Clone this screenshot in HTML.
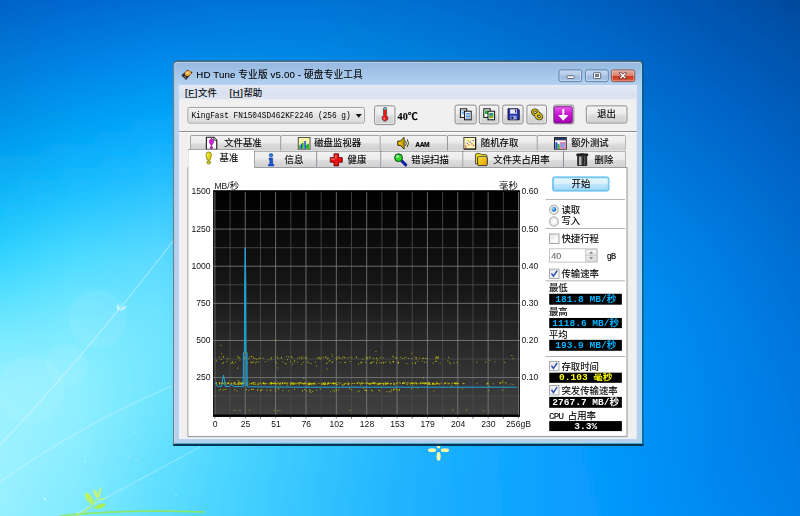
<!DOCTYPE html>
<html lang="zh-CN"><head><meta charset="utf-8"><title>HD Tune 专业版 v5.00 - 硬盘专业工具</title>
<style>
html,body{margin:0;padding:0}
body{width:800px;height:516px;overflow:hidden;position:relative;background:#0a8cee;font-family:"Liberation Sans","Noto Sans CJK SC",sans-serif}
#bg{position:absolute;left:0;top:0;width:800px;height:516px;overflow:hidden}
#sc{position:absolute;left:0;top:0;width:1024px;height:661px;transform:scale(.78125);transform-origin:0 0}
#sc *{box-sizing:border-box}
.abs{position:absolute}
.ui{font-family:"Liberation Sans","Noto Sans CJK SC",sans-serif;font-size:12px;color:#000;white-space:nowrap;line-height:14px;-webkit-text-stroke:.15px #000}
.mono{font-family:"Liberation Mono","Noto Sans CJK SC",monospace}
#win{position:absolute;border-style:solid;border-width:2px 2px 3px 2px;border-color:#575b62 #15506a #073556 #6e7e8e;border-radius:7px 7px 0 0;
 background:linear-gradient(#96b8df 0,#b2d1f1 29px,#b6d2f0 30px,#b3d0ee 100%);box-shadow:inset 1px 1px 0 #d8e7f8,inset -1px 0 0 #8fe2f8,inset 0 -1px 0 #22a0b0}
#client{position:absolute;background:#f0f0f0}
.cap{position:absolute;border:1px solid #4d6e9c;border-radius:3px;box-shadow:inset 0 0 0 1px rgba(255,255,255,.55);background:linear-gradient(#c3d7f0 0,#b4cbea 48%,#9dbbe2 52%,#a9c5e8 100%)}
.cap.close{border-color:#8a3a30;background:linear-gradient(#e9b0a4 0,#dc7f6f 48%,#c8391f 52%,#d9583a 100%)}
#menubar{position:absolute;background:linear-gradient(#e4eaf6,#d9e1ef 60%,#dde5f1)}
.btn{position:absolute;border:1px solid #707070;border-radius:3px;background:linear-gradient(#f2f2f2 0,#ebebeb 48%,#dddddd 52%,#cfcfcf 100%);box-shadow:inset 0 0 0 1px #fcfcfc}
.tab{position:absolute;border:1px solid #767a84;border-bottom:none;background:linear-gradient(#f2f2f2 0,#ebebeb 48%,#dddddd 52%,#cfcfcf 100%);border-radius:2px 2px 0 0}
.tab.sel{background:#fff}
.tab span{position:absolute}
#page{position:absolute;background:#fff;border:1px solid #80848d;box-shadow:1px 1px 0 #d4d6da}
.sep{position:absolute;height:1px;background:#a0a0a0}
.lcd{position:absolute;background:#000;font-family:"Liberation Mono","Noto Sans CJK SC",monospace;font-weight:bold;font-size:12.2px;line-height:14px;text-align:center;white-space:nowrap;overflow:hidden}
.chk{position:absolute;border:1px solid #8e8f8f;background:linear-gradient(135deg,#dcdcdc,#fff 70%);box-shadow:inset 0 0 0 1px #f4f4f4}
.rad{position:absolute;border:1px solid #8e8f8f;border-radius:50%;background:radial-gradient(#fff 20%,#d8d8d8)}
svg{position:absolute;overflow:visible}
svg text{font-family:"Liberation Sans","Noto Sans CJK SC",sans-serif}
</style></head><body>
<svg id="bg" width="800" height="516" viewBox="0 0 800 516"><defs>
<linearGradient id="r0" x1="0" x2="1" y1="0" y2="0"><stop offset="0.00" stop-color="#0057c0"/><stop offset="0.10" stop-color="#005cc7"/><stop offset="0.20" stop-color="#0062cc"/><stop offset="0.30" stop-color="#0067cf"/><stop offset="0.40" stop-color="#0068ce"/><stop offset="0.50" stop-color="#0065c9"/><stop offset="0.60" stop-color="#0061c3"/><stop offset="0.70" stop-color="#005bbb"/><stop offset="0.80" stop-color="#0054b1"/><stop offset="0.90" stop-color="#004ca4"/><stop offset="1.00" stop-color="#004496"/></linearGradient>
<linearGradient id="r1" x1="0" x2="1" y1="0" y2="0"><stop offset="0.00" stop-color="#005bc3"/><stop offset="0.10" stop-color="#0061cb"/><stop offset="0.20" stop-color="#0067d0"/><stop offset="0.30" stop-color="#006bd2"/><stop offset="0.40" stop-color="#006cd1"/><stop offset="0.50" stop-color="#0069cd"/><stop offset="0.60" stop-color="#0064c6"/><stop offset="0.70" stop-color="#005ebe"/><stop offset="0.80" stop-color="#0056b4"/><stop offset="0.90" stop-color="#004ea7"/><stop offset="1.00" stop-color="#004699"/></linearGradient>
<linearGradient id="r2" x1="0" x2="1" y1="0" y2="0"><stop offset="0.00" stop-color="#005fc6"/><stop offset="0.10" stop-color="#0066ce"/><stop offset="0.20" stop-color="#006cd4"/><stop offset="0.30" stop-color="#0070d6"/><stop offset="0.40" stop-color="#0070d4"/><stop offset="0.50" stop-color="#006dd0"/><stop offset="0.60" stop-color="#0067c9"/><stop offset="0.70" stop-color="#0061c1"/><stop offset="0.80" stop-color="#0059b7"/><stop offset="0.90" stop-color="#0051aa"/><stop offset="1.00" stop-color="#00489c"/></linearGradient>
<linearGradient id="r3" x1="0" x2="1" y1="0" y2="0"><stop offset="0.00" stop-color="#0064c9"/><stop offset="0.10" stop-color="#006ad2"/><stop offset="0.20" stop-color="#0071d7"/><stop offset="0.30" stop-color="#0075da"/><stop offset="0.40" stop-color="#0075d8"/><stop offset="0.50" stop-color="#0071d3"/><stop offset="0.60" stop-color="#006bcc"/><stop offset="0.70" stop-color="#0064c4"/><stop offset="0.80" stop-color="#005bba"/><stop offset="0.90" stop-color="#0053ad"/><stop offset="1.00" stop-color="#004a9e"/></linearGradient>
<linearGradient id="r4" x1="0" x2="1" y1="0" y2="0"><stop offset="0.00" stop-color="#0068cc"/><stop offset="0.10" stop-color="#006fd5"/><stop offset="0.20" stop-color="#0076db"/><stop offset="0.30" stop-color="#007add"/><stop offset="0.40" stop-color="#0079db"/><stop offset="0.50" stop-color="#0175d6"/><stop offset="0.60" stop-color="#016ecf"/><stop offset="0.70" stop-color="#0067c7"/><stop offset="0.80" stop-color="#005ebd"/><stop offset="0.90" stop-color="#0055b0"/><stop offset="1.00" stop-color="#004ca1"/></linearGradient>
<linearGradient id="r5" x1="0" x2="1" y1="0" y2="0"><stop offset="0.00" stop-color="#006cd0"/><stop offset="0.10" stop-color="#0074d9"/><stop offset="0.20" stop-color="#007bdf"/><stop offset="0.30" stop-color="#007fe1"/><stop offset="0.40" stop-color="#017ede"/><stop offset="0.50" stop-color="#0278d8"/><stop offset="0.60" stop-color="#0171d2"/><stop offset="0.70" stop-color="#0069ca"/><stop offset="0.80" stop-color="#0060c0"/><stop offset="0.90" stop-color="#0057b3"/><stop offset="1.00" stop-color="#004ea4"/></linearGradient>
<linearGradient id="r6" x1="0" x2="1" y1="0" y2="0"><stop offset="0.00" stop-color="#0071d3"/><stop offset="0.10" stop-color="#007add"/><stop offset="0.20" stop-color="#0081e3"/><stop offset="0.30" stop-color="#0184e4"/><stop offset="0.40" stop-color="#0282e1"/><stop offset="0.50" stop-color="#037cdb"/><stop offset="0.60" stop-color="#0275d5"/><stop offset="0.70" stop-color="#016ccd"/><stop offset="0.80" stop-color="#0063c3"/><stop offset="0.90" stop-color="#0059b6"/><stop offset="1.00" stop-color="#0050a7"/></linearGradient>
<linearGradient id="r7" x1="0" x2="1" y1="0" y2="0"><stop offset="0.00" stop-color="#0076d6"/><stop offset="0.10" stop-color="#007fe1"/><stop offset="0.20" stop-color="#0087e7"/><stop offset="0.30" stop-color="#0289e7"/><stop offset="0.40" stop-color="#0486e4"/><stop offset="0.50" stop-color="#0480de"/><stop offset="0.60" stop-color="#0378d7"/><stop offset="0.70" stop-color="#016fcf"/><stop offset="0.80" stop-color="#0065c6"/><stop offset="0.90" stop-color="#005bb9"/><stop offset="1.00" stop-color="#0052aa"/></linearGradient>
<linearGradient id="r8" x1="0" x2="1" y1="0" y2="0"><stop offset="0.00" stop-color="#007ada"/><stop offset="0.10" stop-color="#0084e5"/><stop offset="0.20" stop-color="#008ceb"/><stop offset="0.30" stop-color="#048eea"/><stop offset="0.40" stop-color="#068be6"/><stop offset="0.50" stop-color="#0684e1"/><stop offset="0.60" stop-color="#047bda"/><stop offset="0.70" stop-color="#0272d2"/><stop offset="0.80" stop-color="#0068c9"/><stop offset="0.90" stop-color="#005dbc"/><stop offset="1.00" stop-color="#0054ad"/></linearGradient>
<linearGradient id="r9" x1="0" x2="1" y1="0" y2="0"><stop offset="0.00" stop-color="#007fdd"/><stop offset="0.10" stop-color="#008ae8"/><stop offset="0.20" stop-color="#0092ef"/><stop offset="0.30" stop-color="#0693ed"/><stop offset="0.40" stop-color="#088fe9"/><stop offset="0.50" stop-color="#0787e3"/><stop offset="0.60" stop-color="#057edd"/><stop offset="0.70" stop-color="#0275d5"/><stop offset="0.80" stop-color="#006acb"/><stop offset="0.90" stop-color="#005fbf"/><stop offset="1.00" stop-color="#0056b0"/></linearGradient>
<linearGradient id="r10" x1="0" x2="1" y1="0" y2="0"><stop offset="0.00" stop-color="#0084e0"/><stop offset="0.10" stop-color="#0090ec"/><stop offset="0.20" stop-color="#0098f2"/><stop offset="0.30" stop-color="#0898f0"/><stop offset="0.40" stop-color="#0a93eb"/><stop offset="0.50" stop-color="#088be6"/><stop offset="0.60" stop-color="#0581df"/><stop offset="0.70" stop-color="#0377d8"/><stop offset="0.80" stop-color="#016cce"/><stop offset="0.90" stop-color="#0061c2"/><stop offset="1.00" stop-color="#0057b3"/></linearGradient>
<linearGradient id="r11" x1="0" x2="1" y1="0" y2="0"><stop offset="0.00" stop-color="#0089e3"/><stop offset="0.10" stop-color="#0095ef"/><stop offset="0.20" stop-color="#039ef5"/><stop offset="0.30" stop-color="#0b9df3"/><stop offset="0.40" stop-color="#0c97ee"/><stop offset="0.50" stop-color="#0a8ee8"/><stop offset="0.60" stop-color="#0684e1"/><stop offset="0.70" stop-color="#037ada"/><stop offset="0.80" stop-color="#016fd1"/><stop offset="0.90" stop-color="#0063c5"/><stop offset="1.00" stop-color="#0059b5"/></linearGradient>
<linearGradient id="r12" x1="0" x2="1" y1="0" y2="0"><stop offset="0.00" stop-color="#008ee6"/><stop offset="0.10" stop-color="#009bf2"/><stop offset="0.20" stop-color="#05a3f8"/><stop offset="0.30" stop-color="#0ea2f5"/><stop offset="0.40" stop-color="#0f9bf0"/><stop offset="0.50" stop-color="#0c91ea"/><stop offset="0.60" stop-color="#0787e4"/><stop offset="0.70" stop-color="#037cdd"/><stop offset="0.80" stop-color="#0171d4"/><stop offset="0.90" stop-color="#0065c8"/><stop offset="1.00" stop-color="#005bb8"/></linearGradient>
<linearGradient id="r13" x1="0" x2="1" y1="0" y2="0"><stop offset="0.00" stop-color="#0093e9"/><stop offset="0.10" stop-color="#01a1f5"/><stop offset="0.20" stop-color="#09a9fa"/><stop offset="0.30" stop-color="#12a7f7"/><stop offset="0.40" stop-color="#129ff2"/><stop offset="0.50" stop-color="#0d95ec"/><stop offset="0.60" stop-color="#088ae6"/><stop offset="0.70" stop-color="#047fdf"/><stop offset="0.80" stop-color="#0173d6"/><stop offset="0.90" stop-color="#0067ca"/><stop offset="1.00" stop-color="#005cba"/></linearGradient>
<linearGradient id="r14" x1="0" x2="1" y1="0" y2="0"><stop offset="0.00" stop-color="#0299ec"/><stop offset="0.10" stop-color="#04a7f7"/><stop offset="0.20" stop-color="#0eaefc"/><stop offset="0.30" stop-color="#16abf9"/><stop offset="0.40" stop-color="#14a3f4"/><stop offset="0.50" stop-color="#0f98ee"/><stop offset="0.60" stop-color="#098de8"/><stop offset="0.70" stop-color="#0481e1"/><stop offset="0.80" stop-color="#0175d9"/><stop offset="0.90" stop-color="#0069cd"/><stop offset="1.00" stop-color="#005ebd"/></linearGradient>
<linearGradient id="r15" x1="0" x2="1" y1="0" y2="0"><stop offset="0.00" stop-color="#049fef"/><stop offset="0.10" stop-color="#08acfa"/><stop offset="0.20" stop-color="#14b4fe"/><stop offset="0.30" stop-color="#1bb0fa"/><stop offset="0.40" stop-color="#18a6f5"/><stop offset="0.50" stop-color="#119bf0"/><stop offset="0.60" stop-color="#0a8fea"/><stop offset="0.70" stop-color="#0584e3"/><stop offset="0.80" stop-color="#0178db"/><stop offset="0.90" stop-color="#006bcf"/><stop offset="1.00" stop-color="#0060bf"/></linearGradient>
<linearGradient id="r16" x1="0" x2="1" y1="0" y2="0"><stop offset="0.00" stop-color="#07a6f1"/><stop offset="0.10" stop-color="#0db2fb"/><stop offset="0.20" stop-color="#1bb9ff"/><stop offset="0.30" stop-color="#20b4fc"/><stop offset="0.40" stop-color="#1baaf7"/><stop offset="0.50" stop-color="#139ef1"/><stop offset="0.60" stop-color="#0b92ec"/><stop offset="0.70" stop-color="#0586e5"/><stop offset="0.80" stop-color="#017add"/><stop offset="0.90" stop-color="#006dd2"/><stop offset="1.00" stop-color="#0061c2"/></linearGradient>
<linearGradient id="r17" x1="0" x2="1" y1="0" y2="0"><stop offset="0.00" stop-color="#0aacf4"/><stop offset="0.10" stop-color="#13b8fd"/><stop offset="0.20" stop-color="#22bdff"/><stop offset="0.30" stop-color="#25b8fd"/><stop offset="0.40" stop-color="#1eadf8"/><stop offset="0.50" stop-color="#14a0f3"/><stop offset="0.60" stop-color="#0c94ee"/><stop offset="0.70" stop-color="#0588e7"/><stop offset="0.80" stop-color="#017cdf"/><stop offset="0.90" stop-color="#006fd4"/><stop offset="1.00" stop-color="#0063c4"/></linearGradient>
<linearGradient id="r18" x1="0" x2="1" y1="0" y2="0"><stop offset="0.00" stop-color="#0eb2f6"/><stop offset="0.10" stop-color="#1abdfe"/><stop offset="0.20" stop-color="#2ac2ff"/><stop offset="0.30" stop-color="#2abcfe"/><stop offset="0.40" stop-color="#21b0f9"/><stop offset="0.50" stop-color="#16a3f4"/><stop offset="0.60" stop-color="#0d96ef"/><stop offset="0.70" stop-color="#068ae9"/><stop offset="0.80" stop-color="#017ee1"/><stop offset="0.90" stop-color="#0071d6"/><stop offset="1.00" stop-color="#0064c6"/></linearGradient>
<linearGradient id="r19" x1="0" x2="1" y1="0" y2="0"><stop offset="0.00" stop-color="#12b8f8"/><stop offset="0.10" stop-color="#21c3ff"/><stop offset="0.20" stop-color="#32c7ff"/><stop offset="0.30" stop-color="#30bffe"/><stop offset="0.40" stop-color="#24b3fa"/><stop offset="0.50" stop-color="#18a6f6"/><stop offset="0.60" stop-color="#0e99f1"/><stop offset="0.70" stop-color="#068ceb"/><stop offset="0.80" stop-color="#0180e3"/><stop offset="0.90" stop-color="#0073d8"/><stop offset="1.00" stop-color="#0066c8"/></linearGradient>
<linearGradient id="r20" x1="0" x2="1" y1="0" y2="0"><stop offset="0.00" stop-color="#17befa"/><stop offset="0.10" stop-color="#29c8ff"/><stop offset="0.20" stop-color="#3bcbff"/><stop offset="0.30" stop-color="#35c3ff"/><stop offset="0.40" stop-color="#27b6fb"/><stop offset="0.50" stop-color="#1aa8f7"/><stop offset="0.60" stop-color="#0f9bf2"/><stop offset="0.70" stop-color="#068eed"/><stop offset="0.80" stop-color="#0182e5"/><stop offset="0.90" stop-color="#0075da"/><stop offset="1.00" stop-color="#0067ca"/></linearGradient>
<linearGradient id="r21" x1="0" x2="1" y1="0" y2="0"><stop offset="0.00" stop-color="#1dc4fb"/><stop offset="0.10" stop-color="#32cdff"/><stop offset="0.20" stop-color="#43cfff"/><stop offset="0.30" stop-color="#3ac6ff"/><stop offset="0.40" stop-color="#2ab8fc"/><stop offset="0.50" stop-color="#1baaf8"/><stop offset="0.60" stop-color="#0f9df4"/><stop offset="0.70" stop-color="#0790ee"/><stop offset="0.80" stop-color="#0184e7"/><stop offset="0.90" stop-color="#0077dc"/><stop offset="1.00" stop-color="#0068cc"/></linearGradient>
<linearGradient id="r22" x1="0" x2="1" y1="0" y2="0"><stop offset="0.00" stop-color="#23c9fc"/><stop offset="0.10" stop-color="#3bd2ff"/><stop offset="0.20" stop-color="#4cd3ff"/><stop offset="0.30" stop-color="#3fc9ff"/><stop offset="0.40" stop-color="#2dbbfd"/><stop offset="0.50" stop-color="#1dacf9"/><stop offset="0.60" stop-color="#109ef5"/><stop offset="0.70" stop-color="#0792f0"/><stop offset="0.80" stop-color="#0186e8"/><stop offset="0.90" stop-color="#0079de"/><stop offset="1.00" stop-color="#006acd"/></linearGradient>
<linearGradient id="r23" x1="0" x2="1" y1="0" y2="0"><stop offset="0.00" stop-color="#2acefd"/><stop offset="0.10" stop-color="#44d7ff"/><stop offset="0.20" stop-color="#53d6ff"/><stop offset="0.30" stop-color="#44ccff"/><stop offset="0.40" stop-color="#2fbdfd"/><stop offset="0.50" stop-color="#1eaefa"/><stop offset="0.60" stop-color="#11a0f6"/><stop offset="0.70" stop-color="#0793f1"/><stop offset="0.80" stop-color="#0187ea"/><stop offset="0.90" stop-color="#007adf"/><stop offset="1.00" stop-color="#006bcf"/></linearGradient>
<linearGradient id="r24" x1="0" x2="1" y1="0" y2="0"><stop offset="0.00" stop-color="#33d3fe"/><stop offset="0.10" stop-color="#4ddbff"/><stop offset="0.20" stop-color="#5adaff"/><stop offset="0.30" stop-color="#48ceff"/><stop offset="0.40" stop-color="#32bffe"/><stop offset="0.50" stop-color="#1faffb"/><stop offset="0.60" stop-color="#11a1f7"/><stop offset="0.70" stop-color="#0795f2"/><stop offset="0.80" stop-color="#0189eb"/><stop offset="0.90" stop-color="#007ce1"/><stop offset="1.00" stop-color="#006cd1"/></linearGradient>
<linearGradient id="r25" x1="0" x2="1" y1="0" y2="0"><stop offset="0.00" stop-color="#3dd7fe"/><stop offset="0.10" stop-color="#56deff"/><stop offset="0.20" stop-color="#60dcff"/><stop offset="0.30" stop-color="#4bd0ff"/><stop offset="0.40" stop-color="#34c0fe"/><stop offset="0.50" stop-color="#20b1fb"/><stop offset="0.60" stop-color="#12a3f8"/><stop offset="0.70" stop-color="#0896f4"/><stop offset="0.80" stop-color="#028aed"/><stop offset="0.90" stop-color="#007de2"/><stop offset="1.00" stop-color="#006ed2"/></linearGradient>
<linearGradient id="r26" x1="0" x2="1" y1="0" y2="0"><stop offset="0.00" stop-color="#48dbff"/><stop offset="0.10" stop-color="#5fe1ff"/><stop offset="0.20" stop-color="#64deff"/><stop offset="0.30" stop-color="#4ed2ff"/><stop offset="0.40" stop-color="#35c2fe"/><stop offset="0.50" stop-color="#21b2fc"/><stop offset="0.60" stop-color="#12a4f9"/><stop offset="0.70" stop-color="#0898f5"/><stop offset="0.80" stop-color="#028cee"/><stop offset="0.90" stop-color="#007ee3"/><stop offset="1.00" stop-color="#006fd4"/></linearGradient>
<linearGradient id="r27" x1="0" x2="1" y1="0" y2="0"><stop offset="0.00" stop-color="#53dfff"/><stop offset="0.10" stop-color="#67e4ff"/><stop offset="0.20" stop-color="#68e0ff"/><stop offset="0.30" stop-color="#51d3ff"/><stop offset="0.40" stop-color="#37c3fe"/><stop offset="0.50" stop-color="#22b3fc"/><stop offset="0.60" stop-color="#13a5fa"/><stop offset="0.70" stop-color="#0899f6"/><stop offset="0.80" stop-color="#028def"/><stop offset="0.90" stop-color="#007fe4"/><stop offset="1.00" stop-color="#0070d5"/></linearGradient>
<linearGradient id="r28" x1="0" x2="1" y1="0" y2="0"><stop offset="0.00" stop-color="#5ee2ff"/><stop offset="0.10" stop-color="#6fe6ff"/><stop offset="0.20" stop-color="#6be2ff"/><stop offset="0.30" stop-color="#52d4ff"/><stop offset="0.40" stop-color="#38c4ff"/><stop offset="0.50" stop-color="#23b4fd"/><stop offset="0.60" stop-color="#13a6fa"/><stop offset="0.70" stop-color="#089af7"/><stop offset="0.80" stop-color="#028ef0"/><stop offset="0.90" stop-color="#0080e5"/><stop offset="1.00" stop-color="#0071d6"/></linearGradient>
<linearGradient id="r29" x1="0" x2="1" y1="0" y2="0"><stop offset="0.00" stop-color="#69e5ff"/><stop offset="0.10" stop-color="#76e8ff"/><stop offset="0.20" stop-color="#6ee3ff"/><stop offset="0.30" stop-color="#53d5ff"/><stop offset="0.40" stop-color="#39c5ff"/><stop offset="0.50" stop-color="#23b5fd"/><stop offset="0.60" stop-color="#13a7fb"/><stop offset="0.70" stop-color="#089bf8"/><stop offset="0.80" stop-color="#028ff1"/><stop offset="0.90" stop-color="#0081e6"/><stop offset="1.00" stop-color="#0072d8"/></linearGradient>
<linearGradient id="r30" x1="0" x2="1" y1="0" y2="0"><stop offset="0.00" stop-color="#73e8ff"/><stop offset="0.10" stop-color="#7ceaff"/><stop offset="0.20" stop-color="#70e4ff"/><stop offset="0.30" stop-color="#54d6ff"/><stop offset="0.40" stop-color="#39c5ff"/><stop offset="0.50" stop-color="#24b5fe"/><stop offset="0.60" stop-color="#14a8fc"/><stop offset="0.70" stop-color="#089bf8"/><stop offset="0.80" stop-color="#028ff2"/><stop offset="0.90" stop-color="#0082e7"/><stop offset="1.00" stop-color="#0073d9"/></linearGradient>
<linearGradient id="r31" x1="0" x2="1" y1="0" y2="0"><stop offset="0.00" stop-color="#7ceaff"/><stop offset="0.10" stop-color="#82ecff"/><stop offset="0.20" stop-color="#71e5ff"/><stop offset="0.30" stop-color="#54d6ff"/><stop offset="0.40" stop-color="#39c6ff"/><stop offset="0.50" stop-color="#24b6fe"/><stop offset="0.60" stop-color="#14a8fc"/><stop offset="0.70" stop-color="#089cf9"/><stop offset="0.80" stop-color="#0290f3"/><stop offset="0.90" stop-color="#0083e8"/><stop offset="1.00" stop-color="#0074da"/></linearGradient>
<linearGradient id="r32" x1="0" x2="1" y1="0" y2="0"><stop offset="0.00" stop-color="#84edff"/><stop offset="0.10" stop-color="#87edff"/><stop offset="0.20" stop-color="#72e5ff"/><stop offset="0.30" stop-color="#54d7ff"/><stop offset="0.40" stop-color="#39c6ff"/><stop offset="0.50" stop-color="#24b6fe"/><stop offset="0.60" stop-color="#14a9fd"/><stop offset="0.70" stop-color="#089dfa"/><stop offset="0.80" stop-color="#0291f4"/><stop offset="0.90" stop-color="#0083e9"/><stop offset="1.00" stop-color="#0075db"/></linearGradient>
<linearGradient id="r33" x1="0" x2="1" y1="0" y2="0"><stop offset="0.00" stop-color="#8ceeff"/><stop offset="0.10" stop-color="#8aeeff"/><stop offset="0.20" stop-color="#72e6ff"/><stop offset="0.30" stop-color="#53d7ff"/><stop offset="0.40" stop-color="#39c6ff"/><stop offset="0.50" stop-color="#24b6fe"/><stop offset="0.60" stop-color="#14a9fd"/><stop offset="0.70" stop-color="#089dfb"/><stop offset="0.80" stop-color="#0291f4"/><stop offset="0.90" stop-color="#0084e9"/><stop offset="1.00" stop-color="#0076dc"/></linearGradient>
<linearGradient id="r34" x1="0" x2="1" y1="0" y2="0"><stop offset="0.00" stop-color="#92f0ff"/><stop offset="0.10" stop-color="#8defff"/><stop offset="0.20" stop-color="#71e5ff"/><stop offset="0.30" stop-color="#52d7ff"/><stop offset="0.40" stop-color="#39c6ff"/><stop offset="0.50" stop-color="#24b6fe"/><stop offset="0.60" stop-color="#14a9fd"/><stop offset="0.70" stop-color="#089dfb"/><stop offset="0.80" stop-color="#0291f5"/><stop offset="0.90" stop-color="#0084ea"/><stop offset="1.00" stop-color="#0076dd"/></linearGradient>
<linearGradient id="r35" x1="0" x2="1" y1="0" y2="0"><stop offset="0.00" stop-color="#97f1ff"/><stop offset="0.10" stop-color="#8fefff"/><stop offset="0.20" stop-color="#71e5ff"/><stop offset="0.30" stop-color="#51d6ff"/><stop offset="0.40" stop-color="#38c6ff"/><stop offset="0.50" stop-color="#24b6fe"/><stop offset="0.60" stop-color="#14aafe"/><stop offset="0.70" stop-color="#089efc"/><stop offset="0.80" stop-color="#0292f6"/><stop offset="0.90" stop-color="#0084eb"/><stop offset="1.00" stop-color="#0077de"/></linearGradient>
<linearGradient id="r36" x1="0" x2="1" y1="0" y2="0"><stop offset="0.00" stop-color="#9af2ff"/><stop offset="0.10" stop-color="#8fefff"/><stop offset="0.20" stop-color="#6fe5ff"/><stop offset="0.30" stop-color="#50d6ff"/><stop offset="0.40" stop-color="#37c6ff"/><stop offset="0.50" stop-color="#24b6ff"/><stop offset="0.60" stop-color="#14aafe"/><stop offset="0.70" stop-color="#089efd"/><stop offset="0.80" stop-color="#0292f6"/><stop offset="0.90" stop-color="#0085eb"/><stop offset="1.00" stop-color="#0078df"/></linearGradient>
<linearGradient id="r37" x1="0" x2="1" y1="0" y2="0"><stop offset="0.00" stop-color="#9cf2ff"/><stop offset="0.10" stop-color="#8fefff"/><stop offset="0.20" stop-color="#6ee4ff"/><stop offset="0.30" stop-color="#4ed5ff"/><stop offset="0.40" stop-color="#37c5ff"/><stop offset="0.50" stop-color="#24b6ff"/><stop offset="0.60" stop-color="#14aafe"/><stop offset="0.70" stop-color="#089efd"/><stop offset="0.80" stop-color="#0292f7"/><stop offset="0.90" stop-color="#0085eb"/><stop offset="1.00" stop-color="#0078df"/></linearGradient>
<linearGradient id="r38" x1="0" x2="1" y1="0" y2="0"><stop offset="0.00" stop-color="#9df2ff"/><stop offset="0.10" stop-color="#8eeeff"/><stop offset="0.20" stop-color="#6be3ff"/><stop offset="0.30" stop-color="#4cd5ff"/><stop offset="0.40" stop-color="#36c5ff"/><stop offset="0.50" stop-color="#23b6ff"/><stop offset="0.60" stop-color="#14aaff"/><stop offset="0.70" stop-color="#089efe"/><stop offset="0.80" stop-color="#0292f8"/><stop offset="0.90" stop-color="#0085ec"/><stop offset="1.00" stop-color="#0079e0"/></linearGradient>
<linearGradient id="r39" x1="0" x2="1" y1="0" y2="0"><stop offset="0.00" stop-color="#9df2ff"/><stop offset="0.10" stop-color="#8deeff"/><stop offset="0.20" stop-color="#69e2ff"/><stop offset="0.30" stop-color="#4bd4ff"/><stop offset="0.40" stop-color="#35c4ff"/><stop offset="0.50" stop-color="#23b5ff"/><stop offset="0.60" stop-color="#14aaff"/><stop offset="0.70" stop-color="#089ffe"/><stop offset="0.80" stop-color="#0292f8"/><stop offset="0.90" stop-color="#0085ec"/><stop offset="1.00" stop-color="#0079e1"/></linearGradient>
<linearGradient id="r40" x1="0" x2="1" y1="0" y2="0"><stop offset="0.00" stop-color="#9df2ff"/><stop offset="0.10" stop-color="#8bedff"/><stop offset="0.20" stop-color="#67e1ff"/><stop offset="0.30" stop-color="#49d3ff"/><stop offset="0.40" stop-color="#34c4ff"/><stop offset="0.50" stop-color="#23b5ff"/><stop offset="0.60" stop-color="#14aaff"/><stop offset="0.70" stop-color="#089fff"/><stop offset="0.80" stop-color="#0292f9"/><stop offset="0.90" stop-color="#0085ed"/><stop offset="1.00" stop-color="#007ae2"/></linearGradient>
<linearGradient id="r41" x1="0" x2="1" y1="0" y2="0"><stop offset="0.00" stop-color="#9cf2ff"/><stop offset="0.10" stop-color="#89ecff"/><stop offset="0.20" stop-color="#64e0ff"/><stop offset="0.30" stop-color="#48d3ff"/><stop offset="0.40" stop-color="#34c4ff"/><stop offset="0.50" stop-color="#23b5ff"/><stop offset="0.60" stop-color="#14aaff"/><stop offset="0.70" stop-color="#089fff"/><stop offset="0.80" stop-color="#0293f9"/><stop offset="0.90" stop-color="#0085ee"/><stop offset="1.00" stop-color="#007be3"/></linearGradient>
<linearGradient id="r42" x1="0" x2="1" y1="0" y2="0"><stop offset="0.00" stop-color="#9bf2ff"/><stop offset="0.10" stop-color="#87ecff"/><stop offset="0.20" stop-color="#62dfff"/><stop offset="0.30" stop-color="#47d2ff"/><stop offset="0.40" stop-color="#33c3ff"/><stop offset="0.50" stop-color="#22b4ff"/><stop offset="0.60" stop-color="#14a9ff"/><stop offset="0.70" stop-color="#099fff"/><stop offset="0.80" stop-color="#0293fa"/><stop offset="0.90" stop-color="#0086ee"/><stop offset="1.00" stop-color="#007ce4"/></linearGradient>
<linearGradient id="r43" x1="0" x2="1" y1="0" y2="0"><stop offset="0.00" stop-color="#9af1ff"/><stop offset="0.10" stop-color="#85ebff"/><stop offset="0.20" stop-color="#61dfff"/><stop offset="0.30" stop-color="#46d1ff"/><stop offset="0.40" stop-color="#33c3ff"/><stop offset="0.50" stop-color="#22b4ff"/><stop offset="0.60" stop-color="#14a9ff"/><stop offset="0.70" stop-color="#099fff"/><stop offset="0.80" stop-color="#0393fa"/><stop offset="0.90" stop-color="#0086ef"/><stop offset="1.00" stop-color="#007ce5"/></linearGradient>
<linearGradient id="r44" x1="0" x2="1" y1="0" y2="0"><stop offset="0.00" stop-color="#99f1ff"/><stop offset="0.10" stop-color="#83eaff"/><stop offset="0.20" stop-color="#60deff"/><stop offset="0.30" stop-color="#45d1ff"/><stop offset="0.40" stop-color="#32c2ff"/><stop offset="0.50" stop-color="#22b3ff"/><stop offset="0.60" stop-color="#14a9ff"/><stop offset="0.70" stop-color="#099fff"/><stop offset="0.80" stop-color="#0393fb"/><stop offset="0.90" stop-color="#0187f0"/><stop offset="1.00" stop-color="#007de6"/></linearGradient>
<linearGradient id="r45" x1="0" x2="1" y1="0" y2="0"><stop offset="0.00" stop-color="#98f1ff"/><stop offset="0.10" stop-color="#81eaff"/><stop offset="0.20" stop-color="#5fdeff"/><stop offset="0.30" stop-color="#45d1ff"/><stop offset="0.40" stop-color="#32c2ff"/><stop offset="0.50" stop-color="#22b3ff"/><stop offset="0.60" stop-color="#14a9ff"/><stop offset="0.70" stop-color="#099fff"/><stop offset="0.80" stop-color="#0394fb"/><stop offset="0.90" stop-color="#0188f1"/><stop offset="1.00" stop-color="#007ee7"/></linearGradient>
<linearGradient id="r46" x1="0" x2="1" y1="0" y2="0"><stop offset="0.00" stop-color="#96f1ff"/><stop offset="0.10" stop-color="#80e9ff"/><stop offset="0.20" stop-color="#5fddff"/><stop offset="0.30" stop-color="#45d0ff"/><stop offset="0.40" stop-color="#32c2ff"/><stop offset="0.50" stop-color="#22b3ff"/><stop offset="0.60" stop-color="#14a9ff"/><stop offset="0.70" stop-color="#0a9fff"/><stop offset="0.80" stop-color="#0494fb"/><stop offset="0.90" stop-color="#0189f2"/><stop offset="1.00" stop-color="#007fe8"/></linearGradient>
<linearGradient id="r47" x1="0" x2="1" y1="0" y2="0"><stop offset="0.00" stop-color="#95f1ff"/><stop offset="0.10" stop-color="#7fe9ff"/><stop offset="0.20" stop-color="#5fddff"/><stop offset="0.30" stop-color="#44d0ff"/><stop offset="0.40" stop-color="#32c2ff"/><stop offset="0.50" stop-color="#22b4ff"/><stop offset="0.60" stop-color="#15a9ff"/><stop offset="0.70" stop-color="#0aa0ff"/><stop offset="0.80" stop-color="#0495fc"/><stop offset="0.90" stop-color="#0189f3"/><stop offset="1.00" stop-color="#0080e9"/></linearGradient>
<linearGradient id="r48" x1="0" x2="1" y1="0" y2="0"><stop offset="0.00" stop-color="#94f1ff"/><stop offset="0.10" stop-color="#7de9ff"/><stop offset="0.20" stop-color="#5eddff"/><stop offset="0.30" stop-color="#45d0ff"/><stop offset="0.40" stop-color="#32c2ff"/><stop offset="0.50" stop-color="#22b4ff"/><stop offset="0.60" stop-color="#15aaff"/><stop offset="0.70" stop-color="#0ba0ff"/><stop offset="0.80" stop-color="#0595fc"/><stop offset="0.90" stop-color="#028af3"/><stop offset="1.00" stop-color="#0081ea"/></linearGradient>
<linearGradient id="r49" x1="0" x2="1" y1="0" y2="0"><stop offset="0.00" stop-color="#93f1ff"/><stop offset="0.10" stop-color="#7ce8ff"/><stop offset="0.20" stop-color="#5eddff"/><stop offset="0.30" stop-color="#45d0ff"/><stop offset="0.40" stop-color="#32c2ff"/><stop offset="0.50" stop-color="#23b4ff"/><stop offset="0.60" stop-color="#16aaff"/><stop offset="0.70" stop-color="#0ba0ff"/><stop offset="0.80" stop-color="#0596fc"/><stop offset="0.90" stop-color="#028bf4"/><stop offset="1.00" stop-color="#0182eb"/></linearGradient>
<linearGradient id="stk" x1="0" x2="1"><stop offset="0" stop-color="#fff" stop-opacity=".55"/><stop offset="1" stop-color="#fff" stop-opacity="0"/></linearGradient>
<filter id="vb" filterUnits="userSpaceOnUse" x="-10" y="-40" width="820" height="600"><feGaussianBlur stdDeviation="0 7"/></filter>
</defs><g filter="url(#vb)">
<rect x="-5" y="-36" width="810" height="12.6" fill="url(#r0)"/>
<rect x="-5" y="-24" width="810" height="12.6" fill="url(#r1)"/>
<rect x="-5" y="-12" width="810" height="12.6" fill="url(#r2)"/>
<rect x="-5" y="0" width="810" height="12.6" fill="url(#r3)"/>
<rect x="-5" y="12" width="810" height="12.6" fill="url(#r4)"/>
<rect x="-5" y="24" width="810" height="12.6" fill="url(#r5)"/>
<rect x="-5" y="36" width="810" height="12.6" fill="url(#r6)"/>
<rect x="-5" y="48" width="810" height="12.6" fill="url(#r7)"/>
<rect x="-5" y="60" width="810" height="12.6" fill="url(#r8)"/>
<rect x="-5" y="72" width="810" height="12.6" fill="url(#r9)"/>
<rect x="-5" y="84" width="810" height="12.6" fill="url(#r10)"/>
<rect x="-5" y="96" width="810" height="12.6" fill="url(#r11)"/>
<rect x="-5" y="108" width="810" height="12.6" fill="url(#r12)"/>
<rect x="-5" y="120" width="810" height="12.6" fill="url(#r13)"/>
<rect x="-5" y="132" width="810" height="12.6" fill="url(#r14)"/>
<rect x="-5" y="144" width="810" height="12.6" fill="url(#r15)"/>
<rect x="-5" y="156" width="810" height="12.6" fill="url(#r16)"/>
<rect x="-5" y="168" width="810" height="12.6" fill="url(#r17)"/>
<rect x="-5" y="180" width="810" height="12.6" fill="url(#r18)"/>
<rect x="-5" y="192" width="810" height="12.6" fill="url(#r19)"/>
<rect x="-5" y="204" width="810" height="12.6" fill="url(#r20)"/>
<rect x="-5" y="216" width="810" height="12.6" fill="url(#r21)"/>
<rect x="-5" y="228" width="810" height="12.6" fill="url(#r22)"/>
<rect x="-5" y="240" width="810" height="12.6" fill="url(#r23)"/>
<rect x="-5" y="252" width="810" height="12.6" fill="url(#r24)"/>
<rect x="-5" y="264" width="810" height="12.6" fill="url(#r25)"/>
<rect x="-5" y="276" width="810" height="12.6" fill="url(#r26)"/>
<rect x="-5" y="288" width="810" height="12.6" fill="url(#r27)"/>
<rect x="-5" y="300" width="810" height="12.6" fill="url(#r28)"/>
<rect x="-5" y="312" width="810" height="12.6" fill="url(#r29)"/>
<rect x="-5" y="324" width="810" height="12.6" fill="url(#r30)"/>
<rect x="-5" y="336" width="810" height="12.6" fill="url(#r31)"/>
<rect x="-5" y="348" width="810" height="12.6" fill="url(#r32)"/>
<rect x="-5" y="360" width="810" height="12.6" fill="url(#r33)"/>
<rect x="-5" y="372" width="810" height="12.6" fill="url(#r34)"/>
<rect x="-5" y="384" width="810" height="12.6" fill="url(#r35)"/>
<rect x="-5" y="396" width="810" height="12.6" fill="url(#r36)"/>
<rect x="-5" y="408" width="810" height="12.6" fill="url(#r37)"/>
<rect x="-5" y="420" width="810" height="12.6" fill="url(#r38)"/>
<rect x="-5" y="432" width="810" height="12.6" fill="url(#r39)"/>
<rect x="-5" y="444" width="810" height="12.6" fill="url(#r40)"/>
<rect x="-5" y="456" width="810" height="12.6" fill="url(#r41)"/>
<rect x="-5" y="468" width="810" height="12.6" fill="url(#r42)"/>
<rect x="-5" y="480" width="810" height="12.6" fill="url(#r43)"/>
<rect x="-5" y="492" width="810" height="12.6" fill="url(#r44)"/>
<rect x="-5" y="504" width="810" height="12.6" fill="url(#r45)"/>
<rect x="-5" y="516" width="810" height="12.6" fill="url(#r46)"/>
<rect x="-5" y="528" width="810" height="12.6" fill="url(#r47)"/>
<rect x="-5" y="540" width="810" height="12.6" fill="url(#r48)"/>
<rect x="-5" y="552" width="810" height="12.6" fill="url(#r49)"/>
</g>
<g fill="#fff" fill-opacity=".07"><circle cx="31" cy="390" r="34"/><circle cx="67" cy="365" r="21"/><circle cx="98" cy="319" r="29"/></g>
<g fill="none" stroke-linecap="round"><path d="M0 445 Q90 350 180 232" stroke="#fff" stroke-opacity=".33" stroke-width="1.3"/><path d="M0 482 Q80 425 172 386" stroke="#fff" stroke-opacity=".3" stroke-width="1.2"/><path d="M72 516 L200 447" stroke="#fff" stroke-opacity=".28" stroke-width="1.3"/></g>
<path d="M118 311 q-3 -5 0 -7 q3 3 1 7z M120 310 q3 -5 7 -4 q-2 4 -7 5z" fill="#d8f8ff" fill-opacity=".7"/>
<g><path d="M60 516 Q120 509 205 512" fill="none" stroke="#8fe85a" stroke-width="1.6" stroke-opacity=".9"/><path d="M76 516 Q90 510 97 499" fill="none" stroke="#b4f070" stroke-width="1.4"/><path d="M92 505 Q82 498 86 492 Q96 497 92 505Z" fill="#b8f268"/><path d="M97 499 Q92 492 94 489 Q100 493 97 499Z" fill="#c4f57a"/><path d="M98 500 Q102 492 101 486 Q97 493 98 500Z" fill="#c4f57a"/><path d="M98 500 Q104 497 106 498 Q102 501 98 500Z" fill="#c4f57a"/><path d="M93 508 Q100 502 106 504 Q102 511 93 508Z" fill="#a8ec58"/></g>
<g fill="#fff9a6"><ellipse cx="432.1" cy="450.2" rx="4.1" ry="1.9"/><ellipse cx="444.9" cy="450.2" rx="4.1" ry="1.9"/><ellipse cx="438.6" cy="456.4" rx="2" ry="4.3"/><ellipse cx="438.6" cy="445.6" rx="1.8" ry="3"/></g>
<circle cx="135" cy="432" r="0.8" fill="#fff" fill-opacity="0.5"/>
<circle cx="137" cy="459" r="0.7" fill="#fff" fill-opacity="0.4"/>
<circle cx="120" cy="440" r="0.7" fill="#fff" fill-opacity="0.4"/>
<circle cx="45" cy="499" r="1.1" fill="#fff" fill-opacity="0.7"/>
<circle cx="85" cy="461" r="0.8" fill="#fff" fill-opacity="0.5"/>
<circle cx="176" cy="495" r="0.8" fill="#fff" fill-opacity="0.5"/>
<circle cx="129" cy="457" r="0.8" fill="#fff" fill-opacity="0.4"/>
<circle cx="12" cy="386" r="0.8" fill="#fff" fill-opacity="0.4"/>
</svg>
<div id="sc">
<div id="win" style="left:220.80px;top:77.38px;width:603.07px;height:493.76px;"></div>
<svg style="left:231.68px;top:88.32px;width:15.36px;height:15.36px;" viewBox="0 0 12 12"><path d="M0.4 6.2 L6.3 1 L11.3 3.6 L5.2 10.8Z" fill="#2a2a2a"/><path d="M0.4 6.2 L5.2 10.8 L5.2 11.6 L0.4 7.1Z" fill="#111"/><ellipse cx="6.7" cy="4.6" rx="3.2" ry="2.5" transform="rotate(-25 6.7 4.6)" fill="#f0a030"/><ellipse cx="6.2" cy="4.2" rx="1.6" ry="1.2" transform="rotate(-25 6.2 4.2)" fill="#fad27a"/><circle cx="6.7" cy="4.6" r=".6" fill="#ccc"/><path d="M3 7.5 L5 9" stroke="#aaa" stroke-width=".8"/></svg>
<div class="abs ui" id="title" style="left:251.26px;top:89.47px;line-height:15px;font-size:12.4px;letter-spacing:.18px;-webkit-text-stroke:.1px #000">HD Tune 专业版 v5.00 - 硬盘专业工具</div>
<div class="cap" style="left:714.75px;top:89.09px;width:30.59px;height:15.74px;"><svg style="left:0;top:0;width:100%;height:100%" viewBox="0 0 24 12.3"><rect x="8" y="6.2" width="8.2" height="3.2" rx=".8" fill="#fff" stroke="#454858" stroke-width=".9"/></svg></div>
<div class="cap" style="left:748.54px;top:89.09px;width:30.59px;height:15.74px;"><svg style="left:0;top:0;width:100%;height:100%" viewBox="0 0 24 12.3"><rect x="7.9" y="2.8" width="8.2" height="6.6" rx=".8" fill="#fff" stroke="#454858" stroke-width=".9"/><rect x="10.2" y="5" width="3.6" height="2.2" fill="#7f9cc6" stroke="#454858" stroke-width=".8"/></svg></div>
<div class="cap close" style="left:782.34px;top:89.09px;width:30.59px;height:15.74px;"><svg style="left:0;top:0;width:100%;height:100%" viewBox="0 0 24 12.3"><path d="M7.6 2.8 L10.6 2.8 L12 4.5 L13.4 2.8 L16.4 2.8 L13.7 6.1 L16.4 9.4 L13.4 9.4 L12 7.7 L10.6 9.4 L7.6 9.4 L10.3 6.1Z" fill="#fff" stroke="#4a2a2a" stroke-width=".8" stroke-linejoin="round"/></svg></div>
<div id="client" style="left:229.25px;top:108.54px;width:585.73px;height:452.99px;"></div>
<div id="menubar" style="left:229.25px;top:108.54px;width:585.73px;height:18.94px;"></div>
<div class="abs ui" style="left:236.80px;top:111.74px;line-height:15px"><span style="letter-spacing:.9px">[<u>F</u>]</span>文件</div>
<div class="abs ui" style="left:293.63px;top:111.74px;line-height:15px"><span style="letter-spacing:.9px">[<u>H</u>]</span>帮助</div>
<div class="abs" style="left:240.00px;top:136.83px;width:227.20px;height:20.86px;border:1px solid #8a8a8a;border-radius:3px;background:linear-gradient(#f4f4f4,#e6e6e6 50%,#d8d8d8);box-shadow:inset 0 0 0 1px #fafafa"></div>
<div class="abs mono" style="left:244.74px;top:141.06px;font-size:12px;line-height:14px;white-space:pre;color:#000;transform:scaleX(.833);transform-origin:0 0">KingFast FN1504SD462KF2246 (256 g)</div>
<svg style="left:454.66px;top:144.90px;width:8.96px;height:6.40px;" viewBox="0 0 7 5"><path d="M0.2 0.7 L6.4 0.7 L3.3 4.4Z" fill="#111"/></svg>
<div class="btn" style="left:479.23px;top:134.66px;width:26.88px;height:24.96px;"></div>
<svg style="left:485.12px;top:136.96px;width:15.36px;height:20.48px;" viewBox="0 0 12 16"><path d="M4.5 1.6 q0 -1.2 1.6 -1.2 q1.6 0 1.6 1.2 v7 a3 3 0 1 1 -3.2 0z" fill="#f01414" stroke="#30545c" stroke-width=".7"/><path d="M4.9 1.5 q0 -.8 1.2 -.8 q1.2 0 1.2 .8 v1 h-2.4z" fill="#30e0e8"/><circle cx="5.3" cy="11.6" r=".8" fill="#ffd0d0"/></svg>
<div class="abs ui" style="left:508.93px;top:140.54px;font-weight:bold;font-family:'Liberation Serif','Noto Sans CJK SC',serif;font-size:13px;line-height:15px">40℃</div>
<div class="btn" style="left:582.40px;top:134.40px;width:27.26px;height:24.19px;"></div>
<svg style="left:587.71px;top:138.24px;width:16.64px;height:16.64px;" viewBox="0 0 13 13"><rect x="1" y="1" width="6.4" height="8.6" fill="#fff" stroke="#111" stroke-width="1"/><path d="M2.2 3h4M2.2 4.6h2.4M2.2 6.2h2.4" stroke="#2a7ad8" stroke-width=".8"/><rect x="5.2" y="3.4" width="6.6" height="8.6" fill="#fff" stroke="#111" stroke-width="1"/><path d="M6.4 5.6h4.2M6.4 7.2h4.2M6.4 8.8h4.2M6.4 10.4h4.2" stroke="#2a7ad8" stroke-width=".9"/></svg>
<div class="btn" style="left:612.86px;top:134.40px;width:26.62px;height:24.19px;"></div>
<svg style="left:617.86px;top:138.24px;width:16.64px;height:16.64px;" viewBox="0 0 13 13"><rect x="1" y="1" width="6.4" height="8.6" fill="#fff" stroke="#111" stroke-width="1"/><rect x="2" y="2.6" width="3" height="3.6" fill="#2fae3a"/><rect x="5.2" y="3.4" width="6.6" height="8.6" fill="#fff" stroke="#111" stroke-width="1"/><rect x="6.4" y="5" width="4.2" height="5.4" fill="#2fae3a"/><rect x="7" y="5.6" width="2.6" height="1.8" fill="#3a78e0"/><rect x="7.6" y="8.2" width="2.2" height="1.6" fill="#e8a020"/></svg>
<div class="btn" style="left:643.20px;top:134.40px;width:27.26px;height:24.19px;"></div>
<svg style="left:648.51px;top:138.24px;width:16.64px;height:16.64px;" viewBox="0 0 13 13"><path d="M1 1 h10 l1.2 1.2 v9.8 h-11.2z" fill="#2434b8" stroke="#0a0a20" stroke-width=".9"/><rect x="3" y="1.5" width="7" height="4.4" fill="#e8e8f0"/><rect x="8" y="2" width="1.2" height="2.8" fill="#2a2a60"/><rect x="3.4" y="7.8" width="6.2" height="4" fill="#9aa0c8"/><rect x="4.4" y="8.6" width="1.8" height="2.8" fill="#1a2070"/></svg>
<div class="btn" style="left:673.66px;top:134.40px;width:26.62px;height:24.19px;"></div>
<svg style="left:678.66px;top:138.24px;width:16.64px;height:16.64px;" viewBox="0 0 13 13"><g fill="none"><ellipse cx="4.9" cy="4.7" rx="3" ry="2.3" transform="rotate(35 4.9 4.7)" stroke="#1a1600" stroke-width="3"/><ellipse cx="8.3" cy="8.3" rx="3" ry="2.3" transform="rotate(35 8.3 8.3)" stroke="#1a1600" stroke-width="3"/><ellipse cx="4.9" cy="4.7" rx="3" ry="2.3" transform="rotate(35 4.9 4.7)" stroke="#c8b010" stroke-width="1.7"/><ellipse cx="8.3" cy="8.3" rx="3" ry="2.3" transform="rotate(35 8.3 8.3)" stroke="#d8c020" stroke-width="1.7"/></g></svg>
<div class="btn" style="left:708.22px;top:134.40px;width:26.37px;height:24.19px;"></div>
<svg style="left:709.38px;top:135.55px;width:24.06px;height:21.89px;" viewBox="0 0 15.3 14.6" preserveAspectRatio="none"><defs><linearGradient id="mg" x1="0" y1="0" x2="0" y2="1"><stop offset="0" stop-color="#e25ae8"/><stop offset=".5" stop-color="#c812d2"/><stop offset="1" stop-color="#a000b0"/></linearGradient></defs><rect x=".3" y=".3" width="14.7" height="14" rx="1.2" fill="url(#mg)" stroke="#70007c" stroke-width=".6"/><path d="M6.85 2.3 h1.6 v5.2 h3.5 l-4.3 4.9 l-4.3 -4.9 h3.5z" fill="#fff"/></svg>
<div class="btn" style="left:750.46px;top:135.04px;width:52.22px;height:22.53px;"></div>
<div class="abs ui" style="left:764.42px;top:139.01px;line-height:15px">退出</div>
<div class="abs" style="left:229.25px;top:168.19px;width:585.73px;height:1.15px;background:#707070"></div>
<div class="abs" style="left:229.25px;top:169.34px;width:585.73px;height:1.02px;background:#fff"></div>
<div class="tab" style="left:242.69px;top:172.80px;width:117.25px;height:19.71px;"></div>
<svg style="left:263.17px;top:175.17px;width:16.64px;height:16.64px;" viewBox="0 0 13 13"><path d="M.9 .5 h7.4 l3 3 v9 h-10.4z" fill="#fff" stroke="#151515" stroke-width="1.1" stroke-linejoin="round"/><path d="M8.3 .5 v3 h3" fill="#e8e8e8" stroke="#151515" stroke-width=".8"/><path d="M6 1.4 q-2.6 2 -2.2 4 q.8 2.4 2.2 3.6 q1.4 -1.2 2.2 -3.6 q.4 -2 -2.2 -4z" fill="#d818e0" stroke="#4a0050" stroke-width=".4"/><circle cx="6" cy="10.8" r="1.25" fill="#c810d0" stroke="#4a0050" stroke-width=".4"/></svg>
<div class="abs ui" style="left:286.98px;top:176.06px;line-height:14px">文件基准</div>
<div class="tab" style="left:359.04px;top:172.80px;width:128.00px;height:19.71px;"></div>
<svg style="left:380.80px;top:175.17px;width:16.64px;height:16.64px;" viewBox="0 0 13 13"><rect x=".6" y=".8" width="11.8" height="11.6" fill="#f8f4a8" stroke="#444" stroke-width=".9"/><path d="M1.4 12 v-3.5 h1.6 v3.5z M4.4 12 v-6 h1.6 v6z M9.6 12 v-5 h1.8 v5z M8.2 12 v-4 h1.4 v4z" fill="#20b428"/><path d="M3 12 v-5 h1.4 v5z M6.6 12 v-7.6 h1.6 v7.6z" fill="#2050d8"/></svg>
<div class="abs ui" style="left:402.18px;top:176.06px;line-height:14px">磁盘监视器</div>
<div class="tab" style="left:486.14px;top:172.80px;width:86.40px;height:19.71px;"></div>
<svg style="left:508.16px;top:175.17px;width:16.64px;height:16.64px;" viewBox="0 0 13 13"><path d="M.9 4.4 h2.4 l3.9 -3.6 v11.4 l-3.9 -3.6 h-2.4z" fill="#f0cc18" stroke="#2a2200" stroke-width="1" stroke-linejoin="round"/><path d="M4 4.2 l2.4 -2.2 v9 l-2.4 -2.2z" fill="#c8a000"/><path d="M8.6 4 q1.6 2.5 0 5 M10.3 2.6 q2.8 3.9 0 7.8" fill="none" stroke="#3a3000" stroke-width=".9"/></svg>
<div class="abs ui" style="left:531.46px;top:177.60px;font-size:8.6px;font-weight:bold;line-height:14px;letter-spacing:-.5px">AAM</div>
<div class="tab" style="left:571.65px;top:172.80px;width:116.10px;height:19.71px;"></div>
<svg style="left:593.41px;top:175.17px;width:16.64px;height:16.64px;" viewBox="0 0 13 13"><rect x=".6" y=".8" width="11.8" height="11.6" fill="#fff6b8" stroke="#333" stroke-width=".9"/><path d="M12.4 1 v11.4 h-11.6" fill="none" stroke="#111" stroke-width="1"/><g><rect x="2" y="8.6" width="1.2" height="1.2" fill="#e03030"/><rect x="3.4" y="6" width="1.2" height="1.2" fill="#3060e0"/><rect x="5" y="7.6" width="1.2" height="1.2" fill="#e03030"/><rect x="6.4" y="4.8" width="1.2" height="1.2" fill="#3060e0"/><rect x="8" y="6.6" width="1.2" height="1.2" fill="#e03030"/><rect x="9.4" y="3.2" width="1.2" height="1.2" fill="#3060e0"/><rect x="4.4" y="3.6" width="1.2" height="1.2" fill="#e8a020"/><rect x="9.6" y="8.2" width="1.2" height="1.2" fill="#e03030"/><rect x="2" y="10.4" width="1.2" height="1.2" fill="#e03030"/></g></svg>
<div class="abs ui" style="left:615.42px;top:176.06px;line-height:14px">随机存取</div>
<div class="tab" style="left:686.85px;top:172.80px;width:114.18px;height:19.71px;"></div>
<svg style="left:708.61px;top:175.17px;width:16.64px;height:16.64px;" viewBox="0 0 13 13"><rect x=".6" y=".8" width="11.8" height="11.6" fill="#fff" stroke="#222" stroke-width="1"/><rect x="1" y="1.2" width="11" height="2.4" fill="#2a3a6a"/><path d="M1.4 12 v-6.4 h2.2 v6.4z" fill="#2050d8"/><path d="M3.6 12 v-4.6 h2.2 v4.6z" fill="#20b428"/><rect x="5.8" y="5.2" width="6" height="6.8" fill="#f080a8"/><rect x="6.8" y="6.4" width="4" height="4.4" fill="#88a0e8"/></svg>
<div class="abs ui" style="left:731.14px;top:176.06px;line-height:14px">额外测试</div>
<div class="tab" style="left:325.12px;top:193.41px;width:81.02px;height:21.12px;"></div>
<svg style="left:338.56px;top:196.29px;width:16.64px;height:16.64px;" viewBox="0 0 13 13"><circle cx="6.2" cy="2.1" r="1.8" fill="#2a7ae8" stroke="#0a2a80" stroke-width=".5"/><path d="M4.2 5 h3.6 v6.2 h1.2 v1.6 h-5.4 v-1.6 h1.4 v-4.6 h-.8z" fill="#1a5ad8" stroke="#0a2a80" stroke-width=".5"/></svg>
<div class="abs ui" style="left:364.29px;top:197.18px;line-height:14px">信息</div>
<div class="tab" style="left:405.25px;top:193.41px;width:82.43px;height:21.12px;"></div>
<svg style="left:422.02px;top:196.29px;width:16.64px;height:16.64px;" viewBox="0 0 13 13"><path d="M4.3 .7 h4.6 v3.8 h3.7 v4.6 h-3.7 v3.7 h-4.6 v-3.7 h-3.7 v-4.6 h3.7z" fill="#e81010" stroke="#5a0000" stroke-width=".8"/><path d="M5.2 1.6 h1.8 v3.8 h-1.8z M1.4 5.4 h3.8 v1.4 h-3.8z" fill="#ff8070" fill-opacity=".7"/></svg>
<div class="abs ui" style="left:444.93px;top:197.18px;line-height:14px">健康</div>
<div class="tab" style="left:486.78px;top:193.41px;width:106.11px;height:21.12px;"></div>
<svg style="left:503.55px;top:196.29px;width:16.64px;height:16.64px;" viewBox="0 0 13 13"><path d="M7.6 7.4 l4.4 4.4" stroke="#10209a" stroke-width="3" stroke-linecap="round"/><circle cx="4.8" cy="4.6" r="3.9" fill="#28dc28" stroke="#153a15" stroke-width="1"/><circle cx="3.8" cy="3.5" r="1.5" fill="#b0ffb0" fill-opacity=".85"/></svg>
<div class="abs ui" style="left:526.46px;top:197.18px;line-height:14px">错误扫描</div>
<div class="tab" style="left:592.00px;top:193.41px;width:129.92px;height:21.12px;"></div>
<svg style="left:607.74px;top:196.29px;width:16.64px;height:16.64px;" viewBox="0 0 13 13"><defs><linearGradient id="fg" x1="0" y1="0" x2="1" y2="1"><stop offset="0" stop-color="#ffe030"/><stop offset="1" stop-color="#d89c00"/></linearGradient></defs><path d="M.5 2 q0 -1.6 1.6 -1.6 h2.6 q1 0 1.6 1.1 h4.4 q1.2 0 1.2 1.2 v8 h-11.4z" fill="#e8d81c" stroke="#333" stroke-width=".8"/><rect x="2.6" y="3.7" width="9.7" height="8.8" rx=".9" fill="url(#fg)" stroke="#2a2a2a" stroke-width=".9"/><path d="M3.4 4.5 h8" stroke="#fff4a0" stroke-width=".6"/></svg>
<div class="abs ui" style="left:631.42px;top:197.18px;line-height:14px">文件夹占用率</div>
<div class="tab" style="left:721.02px;top:193.41px;width:80.00px;height:21.12px;"></div>
<svg style="left:737.02px;top:196.29px;width:16.64px;height:16.64px;" viewBox="0 0 13 13"><path d="M.6 1.4 q0 -1 1 -1 h9.8 q1 0 1 1 v1.5 h-11.8z" fill="#1c1c1c"/><path d="M4.4 0 h3.6 v.7 h-3.6z" fill="#333"/><path d="M1.4 2.9 h10 v9 q0 .9 -.9 .9 h-8.2 q-.9 0 -.9 -.9z" fill="#262626"/><rect x="3.2" y="3.3" width="2.2" height="8.8" fill="#b4b4b4"/><rect x="5.4" y="3.3" width="1" height="8.8" fill="#777"/><rect x="8.2" y="3.3" width="1.4" height="8.8" fill="#585858"/><path d="M2 2.9 h8.8" stroke="#555" stroke-width=".5"/></svg>
<div class="abs ui" style="left:761.09px;top:197.18px;line-height:14px">删除</div>
<div id="page" style="left:240.38px;top:213.76px;width:562.94px;height:345.47px;"></div>
<div class="tab sel" style="left:240.38px;top:191.23px;width:86.02px;height:24.06px;"></div>
<svg style="left:260.48px;top:194.18px;width:16.64px;height:16.64px;" viewBox="0 0 13 13"><path d="M5.6 .4 q2.7 0 2.7 2.6 q0 2 -1.5 5.6 h-2.4 q-1.5 -3.6 -1.5 -5.6 q0 -2.6 2.7 -2.6z" fill="#e4dc10" stroke="#6a6400" stroke-width=".7"/><ellipse cx="5.6" cy="11" rx="1.9" ry="1.45" fill="#dcd408" stroke="#6a6400" stroke-width=".7"/><path d="M4.6 1.6 q-.8 1 -.4 3" stroke="#fffca0" stroke-width=".7" fill="none"/></svg>
<div class="abs ui" style="left:281.09px;top:195.07px;line-height:14px">基准</div>
<svg style="left:0;top:0;width:1024.00px;height:660.48px" viewBox="0 0 800 516"><defs><linearGradient id="cg" x1="0" y1="0" x2="0" y2="1"><stop offset="0" stop-color="#000"/><stop offset=".45" stop-color="#181818"/><stop offset="1" stop-color="#404040"/></linearGradient></defs><rect x="213.1" y="190.2" width="306.8" height="226.6" fill="#000"/><rect x="214.9" y="192.0" width="303.60" height="222.72" fill="url(#cg)"/><path d="M230.08 192.0 V418.72 M260.44 192.0 V418.72 M290.80 192.0 V418.72 M321.16 192.0 V418.72 M351.52 192.0 V418.72 M381.88 192.0 V418.72 M412.24 192.0 V418.72 M442.60 192.0 V418.72 M472.96 192.0 V418.72 M503.32 192.0 V418.72 M213.2 210.56 H519.8 M213.2 247.68 H519.8 M213.2 284.80 H519.8 M213.2 321.92 H519.8 M213.2 359.04 H519.8 M213.2 396.16 H519.8" stroke="#4e4e4e" stroke-width=".8" fill="none"/><path d="M214.90 192.0 V418.72 M245.26 192.0 V418.72 M275.62 192.0 V418.72 M305.98 192.0 V418.72 M336.34 192.0 V418.72 M366.70 192.0 V418.72 M397.06 192.0 V418.72 M427.42 192.0 V418.72 M457.78 192.0 V418.72 M488.14 192.0 V418.72 M518.50 192.0 V418.72 M213.2 229.12 H519.8 M213.2 266.24 H519.8 M213.2 303.36 H519.8 M213.2 340.48 H519.8 M213.2 377.60 H519.8" stroke="#808080" stroke-width=".8" fill="none"/><rect x="213.2" y="414.72" width="306.6" height="2.08" fill="#000"/><path d="M351.0 384.0h.9 M367.5 383.2h.9 M271.0 382.8h.9 M244.0 382.8h.9 M243.0 383.4h.9 M411.2 383.3h.9 M262.9 383.3h.9 M272.7 383.5h.9 M224.9 382.5h.9 M370.9 383.9h.9 M365.1 383.1h.9 M310.0 383.6h.9 M302.2 383.6h.9 M216.1 382.9h.9 M237.7 383.6h.9 M241.9 383.1h.9 M251.1 383.7h.9 M453.9 383.6h.9 M382.9 383.8h.9 M255.0 384.3h.9 M250.7 383.6h.9 M306.7 383.9h.9 M278.8 384.0h.9 M245.9 382.9h.9 M279.6 383.6h.9 M304.4 383.0h.9 M242.8 383.5h.9 M326.9 384.2h.9 M387.5 383.6h.9 M290.4 383.8h.9 M436.7 383.9h.9 M341.7 384.8h.9 M227.5 383.6h.9 M292.6 384.4h.9 M394.0 383.9h.9 M236.4 384.3h.9 M382.9 383.2h.9 M220.8 383.2h.9 M349.0 383.7h.9 M386.7 384.0h.9 M324.0 384.3h.9 M422.3 383.4h.9 M257.8 384.7h.9 M425.2 383.6h.9 M222.2 382.6h.9 M311.1 383.6h.9 M238.4 383.4h.9 M436.0 382.3h.9 M321.0 384.4h.9 M340.5 382.9h.9 M402.5 382.8h.9 M239.8 383.1h.9 M433.3 383.4h.9 M347.4 382.8h.9 M240.9 384.2h.9 M359.5 383.6h.9 M424.4 382.6h.9 M292.3 382.7h.9 M305.8 383.6h.9 M347.9 383.8h.9 M313.5 383.7h.9 M390.0 384.1h.9 M256.6 384.1h.9 M428.3 382.6h.9 M298.6 383.1h.9 M279.8 383.6h.9 M402.7 383.1h.9 M238.2 384.5h.9 M476.5 383.3h.9 M308.2 382.8h.9 M221.6 383.4h.9 M463.6 383.5h.9 M258.0 383.1h.9 M404.0 383.1h.9 M420.3 383.2h.9 M219.1 383.6h.9 M429.2 383.4h.9 M424.1 384.0h.9 M399.4 382.7h.9 M486.5 384.1h.9 M254.7 382.6h.9 M328.4 382.6h.9 M410.4 383.3h.9 M407.5 382.5h.9 M279.6 385.0h.9 M376.2 383.3h.9 M311.6 383.8h.9 M240.6 383.1h.9 M380.2 383.4h.9 M457.5 383.5h.9 M454.7 383.0h.9 M257.9 384.3h.9 M370.1 384.0h.9 M499.3 382.8h.9 M282.0 383.3h.9 M406.7 384.4h.9 M309.0 384.2h.9 M278.1 382.5h.9 M387.0 382.9h.9 M396.6 383.4h.9 M335.5 382.9h.9 M422.2 383.3h.9 M376.8 384.7h.9 M296.3 383.2h.9 M253.8 384.0h.9 M358.2 382.4h.9 M273.1 383.8h.9 M448.6 383.4h.9 M273.9 383.3h.9 M322.0 383.1h.9 M247.2 384.0h.9 M290.7 384.0h.9 M374.3 383.1h.9 M374.0 383.9h.9 M276.9 383.1h.9 M437.1 383.0h.9 M310.0 383.9h.9 M287.4 385.4h.9 M293.4 383.8h.9 M451.8 383.0h.9 M336.2 383.9h.9 M419.7 383.5h.9 M505.1 382.6h.9 M366.0 383.5h.9 M272.3 383.6h.9 M380.6 383.6h.9 M385.7 383.6h.9 M492.7 383.8h.9 M234.4 382.6h.9 M313.5 383.7h.9 M369.8 383.4h.9 M425.2 383.4h.9 M270.0 383.5h.9 M274.2 382.9h.9 M369.0 384.3h.9 M426.3 382.9h.9 M403.8 383.0h.9 M293.0 383.1h.9 M438.2 383.7h.9 M423.4 383.0h.9 M444.4 383.5h.9 M317.9 383.3h.9 M219.1 383.0h.9 M285.2 382.9h.9 M414.8 383.1h.9 M375.1 382.9h.9 M425.3 383.6h.9 M399.7 383.5h.9 M292.5 383.8h.9 M328.1 383.6h.9 M290.8 382.9h.9 M457.6 383.3h.9 M394.3 384.7h.9 M263.7 383.9h.9 M266.4 383.4h.9 M373.2 383.4h.9 M325.1 383.1h.9 M300.6 382.9h.9 M304.3 383.5h.9 M262.7 383.7h.9 M332.3 383.5h.9 M237.8 383.3h.9 M344.2 383.9h.9 M372.2 383.4h.9 M431.7 384.5h.9 M396.1 383.4h.9 M402.3 383.6h.9 M373.6 383.7h.9 M348.1 383.1h.9 M389.8 383.6h.9 M435.2 384.4h.9 M323.2 384.3h.9 M420.5 382.8h.9 M440.9 383.1h.9 M290.2 384.5h.9 M227.7 382.9h.9 M296.8 383.3h.9 M377.6 383.3h.9 M241.7 382.8h.9 M327.3 383.3h.9 M278.8 383.5h.9 M238.1 382.5h.9 M445.4 383.1h.9 M457.7 383.7h.9 M411.1 383.2h.9 M438.7 384.1h.9 M343.6 384.4h.9 M239.3 384.1h.9 M384.4 383.3h.9 M447.5 383.1h.9 M279.6 383.9h.9 M432.4 383.7h.9 M300.4 382.9h.9 M325.3 384.2h.9 M427.7 384.6h.9 M455.7 382.9h.9 M310.7 384.6h.9 M290.0 383.0h.9 M325.1 383.1h.9 M274.1 383.8h.9 M268.6 383.8h.9 M222.5 383.2h.9 M378.4 384.3h.9 M456.1 383.3h.9 M379.2 383.7h.9 M436.0 383.6h.9 M241.2 384.1h.9 M409.7 384.2h.9 M281.7 382.6h.9 M333.7 383.4h.9 M363.3 383.3h.9 M372.3 382.7h.9 M455.5 383.2h.9 M437.2 383.6h.9 M328.0 383.7h.9 M303.1 384.1h.9 M233.6 384.1h.9 M447.6 384.0h.9 M234.5 382.5h.9 M226.8 382.9h.9 M271.0 383.6h.9 M393.5 384.4h.9 M271.1 383.9h.9 M309.0 384.3h.9 M293.7 383.9h.9 M379.3 383.2h.9 M360.0 384.8h.9 M455.2 383.9h.9 M373.4 383.2h.9 M412.2 385.2h.9 M219.1 382.8h.9 M428.9 384.2h.9 M262.9 383.3h.9 M406.1 383.9h.9 M295.5 384.1h.9 M216.3 384.3h.9 M240.5 383.4h.9 M359.3 383.3h.9 M451.6 383.7h.9 M462.6 383.4h.9 M378.2 384.1h.9 M308.9 384.4h.9 M238.6 382.6h.9 M323.3 383.7h.9 M247.5 382.1h.9 M219.6 383.8h.9 M427.9 382.9h.9 M219.0 383.3h.9 M454.6 383.2h.9 M328.2 383.2h.9 M304.9 382.9h.9 M292.5 384.0h.9 M434.3 384.2h.9 M432.0 383.3h.9 M462.8 383.7h.9 M418.3 383.7h.9 M269.6 383.9h.9 M242.8 382.9h.9 M262.8 383.3h.9 M368.7 383.6h.9 M444.9 383.1h.9 M339.0 383.8h.9 M335.6 384.5h.9 M413.0 383.4h.9 M221.4 383.1h.9 M247.6 384.2h.9 M368.0 383.8h.9 M263.2 382.8h.9 M321.2 384.0h.9 M429.5 384.2h.9 M274.8 383.2h.9 M240.8 383.2h.9 M388.0 382.9h.9 M323.8 384.6h.9 M252.9 384.3h.9 M378.2 384.4h.9 M383.2 384.9h.9 M252.5 382.6h.9 M302.1 383.5h.9 M379.5 384.2h.9 M225.5 384.8h.9 M412.5 383.4h.9 M416.3 383.0h.9 M455.9 384.0h.9 M275.5 383.8h.9 M386.0 383.9h.9 M371.1 383.1h.9 M407.5 383.3h.9 M416.3 384.2h.9 M356.2 383.3h.9 M402.2 383.5h.9 M361.0 382.6h.9 M338.0 382.4h.9 M373.0 383.0h.9 M345.0 383.4h.9 M432.6 383.7h.9 M434.5 383.5h.9 M393.1 383.0h.9 M253.1 382.9h.9 M231.4 383.5h.9 M373.0 383.3h.9 M286.3 384.0h.9 M414.7 382.6h.9 M282.1 384.0h.9 M385.1 384.3h.9 M252.9 384.1h.9 M499.9 383.5h.9 M312.9 384.0h.9 M334.5 383.4h.9 M225.2 383.4h.9 M307.8 384.9h.9 M357.0 382.9h.9 M304.1 383.8h.9 M357.0 383.3h.9 M276.2 383.9h.9 M230.8 384.6h.9 M432.6 384.4h.9 M428.8 382.8h.9 M423.7 383.3h.9 M282.6 383.6h.9 M428.1 383.7h.9 M414.3 383.9h.9 M327.1 384.0h.9 M284.3 383.0h.9 M298.6 384.8h.9 M347.4 384.3h.9 M374.4 383.1h.9 M290.8 383.2h.9 M241.9 383.5h.9 M299.2 383.1h.9 M271.5 383.6h.9 M353.7 383.5h.9 M330.8 383.2h.9 M381.9 383.5h.9 M323.3 383.6h.9 M366.9 382.9h.9 M420.2 383.8h.9 M448.7 383.4h.9 M397.5 382.6h.9 M286.4 383.8h.9 M282.0 383.4h.9 M394.1 383.5h.9 M386.9 383.6h.9 M221.2 383.8h.9 M345.7 383.4h.9 M237.6 384.5h.9 M385.8 383.6h.9 M259.6 383.1h.9 M228.5 383.0h.9 M294.9 383.0h.9 M242.3 383.7h.9 M263.6 383.9h.9 M234.2 383.2h.9 M505.7 383.8h.9 M362.1 383.8h.9 M351.9 383.5h.9 M227.6 383.7h.9 M333.2 383.3h.9 M342.6 385.3h.9 M443.8 383.9h.9 M284.5 383.1h.9 M353.7 383.4h.9 M324.6 384.3h.9 M227.7 383.4h.9 M409.9 383.0h.9 M333.2 384.2h.9 M329.7 383.6h.9 M270.7 384.0h.9 M264.8 383.6h.9 M308.0 384.1h.9 M330.3 383.3h.9 M297.9 383.0h.9 M270.3 382.5h.9 M429.5 384.3h.9 M323.7 384.0h.9 M444.5 383.3h.9 M486.8 383.3h.9 M240.7 384.0h.9 M313.0 383.3h.9 M333.5 383.5h.9 M228.1 383.4h.9 M309.1 383.4h.9 M378.3 383.4h.9 M432.5 383.1h.9 M259.9 383.3h.9 M336.9 384.4h.9 M303.1 383.5h.9 M223.2 383.7h.9 M384.9 384.0h.9 M416.1 383.4h.9 M280.5 382.8h.9 M404.8 382.3h.9 M343.6 384.0h.9 M313.9 383.7h.9 M299.5 383.0h.9 M265.7 383.9h.9 M287.5 383.2h.9 M260.9 384.0h.9 M425.3 383.5h.9 M332.8 383.4h.9 M234.7 384.1h.9 M390.8 383.7h.9 M313.1 384.0h.9 M294.1 383.6h.9 M271.4 382.5h.9 M324.2 382.6h.9 M403.2 383.0h.9 M298.4 383.8h.9 M487.5 383.9h.9 M308.1 384.0h.9 M273.4 383.3h.9 M216.2 383.1h.9 M333.5 382.7h.9 M379.6 383.5h.9 M383.3 384.0h.9 M319.4 383.4h.9 M309.5 383.2h.9 M263.5 382.7h.9 M362.4 383.2h.9 M439.5 383.8h.9 M286.7 383.3h.9 M369.3 383.8h.9 M234.8 384.2h.9 M249.6 384.0h.9 M264.4 383.6h.9 M291.7 383.4h.9 M453.7 383.4h.9 M429.6 383.1h.9 M315.6 384.1h.9 M385.3 382.6h.9 M427.0 384.0h.9 M253.3 382.6h.9 M415.8 383.5h.9 M390.7 383.6h.9 M421.2 383.1h.9 M230.4 383.1h.9 M251.3 383.3h.9 M512.6 384.4h.9 M314.5 382.9h.9 M327.4 383.3h.9 M300.6 382.8h.9 M423.1 382.9h.9 M454.8 383.6h.9 M361.7 383.7h.9 M312.5 383.2h.9 M402.6 383.4h.9 M283.9 383.2h.9 M231.2 383.8h.9 M239.3 381.6h.9 M276.3 383.7h.9 M360.5 383.7h.9 M233.1 383.0h.9 M412.0 383.3h.9 M348.2 384.8h.9 M432.4 383.8h.9 M251.4 383.6h.9 M323.1 383.3h.9 M219.0 384.1h.9 M502.3 382.5h.9 M335.1 383.3h.9 M510.3 384.0h.9 M426.5 383.3h.9 M487.5 383.2h.9 M331.9 383.3h.9 M412.1 383.0h.9 M321.6 384.1h.9 M244.0 357.6h.9 M437.8 357.1h.9 M419.0 357.9h.9 M320.5 357.9h.9 M218.7 357.1h.9 M376.3 358.0h.9 M277.0 357.1h.9 M248.3 358.7h.9 M344.3 357.7h.9 M426.7 358.4h.9 M297.5 358.2h.9 M270.7 357.4h.9 M405.4 357.3h.9 M399.9 357.2h.9 M366.6 358.7h.9 M421.9 358.5h.9 M414.6 357.2h.9 M395.3 358.0h.9 M369.7 357.0h.9 M393.1 357.0h.9 M355.8 357.6h.9 M435.9 357.0h.9 M336.0 359.2h.9 M362.5 359.2h.9 M512.6 358.4h.9 M290.8 356.7h.9 M351.5 357.9h.9 M299.4 357.2h.9 M237.9 357.8h.9 M288.1 356.8h.9 M379.9 357.7h.9 M325.1 357.2h.9 M226.9 358.5h.9 M251.0 356.5h.9 M331.9 356.4h.9 M237.4 356.5h.9 M277.6 358.5h.9 M274.7 356.8h.9 M344.5 357.3h.9 M403.9 358.2h.9 M396.0 357.8h.9 M423.1 358.0h.9 M254.5 358.6h.9 M322.7 357.2h.9 M435.7 357.3h.9 M259.6 358.3h.9 M342.7 356.9h.9 M367.1 358.0h.9 M319.3 357.7h.9 M301.0 358.6h.9 M301.4 357.2h.9 M437.8 356.9h.9 M349.8 357.1h.9 M347.6 357.9h.9 M303.4 357.3h.9 M338.8 357.1h.9 M341.5 358.2h.9 M392.3 356.3h.9 M245.6 358.2h.9 M327.7 358.0h.9 M415.7 359.1h.9 M222.8 356.5h.9 M356.0 357.0h.9 M416.2 357.7h.9 M425.2 358.4h.9 M335.7 357.9h.9 M281.0 357.8h.9 M258.6 358.3h.9 M437.4 358.1h.9 M401.9 358.5h.9 M291.6 357.4h.9 M251.6 356.3h.9 M220.6 359.1h.9 M223.1 357.1h.9 M375.9 358.6h.9 M305.9 358.5h.9 M253.1 357.8h.9 M368.8 357.8h.9 M448.1 357.4h.9 M280.9 357.7h.9 M382.6 357.8h.9 M337.3 357.3h.9 M339.3 358.4h.9 M435.2 358.7h.9 M262.6 358.0h.9 M305.7 357.7h.9 M407.9 358.3h.9 M239.3 357.8h.9 M249.3 357.2h.9 M411.2 358.4h.9 M365.5 357.1h.9 M436.7 358.0h.9 M325.7 356.9h.9 M344.4 362.5h.9 M230.7 363.3h.9 M379.4 362.8h.9 M282.4 361.9h.9 M360.4 362.9h.9 M439.7 363.2h.9 M504.4 362.4h.9 M393.1 361.7h.9 M326.1 363.2h.9 M397.8 362.0h.9 M370.0 363.3h.9 M231.7 362.4h.9 M453.5 363.0h.9 M301.2 364.4h.9 M310.7 363.6h.9 M232.8 363.5h.9 M380.8 362.7h.9 M406.6 363.6h.9 M389.0 361.9h.9 M435.9 361.4h.9 M489.6 360.3h.9 M449.2 362.4h.9 M349.6 361.6h.9 M251.1 362.4h.9 M250.5 362.1h.9 M414.8 362.7h.9 M308.5 362.7h.9 M383.2 362.6h.9 M376.0 363.2h.9 M252.7 362.2h.9 M344.9 362.4h.9 M417.3 361.2h.9 M331.8 362.4h.9 M247.3 362.9h.9 M276.3 363.3h.9 M264.8 361.6h.9 M331.9 361.9h.9 M390.2 363.1h.9 M424.2 362.3h.9 M293.9 361.9h.9 M235.1 362.1h.9 M328.6 361.4h.9 M383.0 362.9h.9 M361.3 362.4h.9 M307.4 362.0h.9 M226.4 361.5h.9 M315.3 362.0h.9 M456.5 362.5h.9 M275.4 361.9h.9 M398.0 362.5h.9 M421.7 361.3h.9 M302.8 362.3h.9 M290.3 361.8h.9 M376.3 362.2h.9 M255.2 363.0h.9 M297.3 362.2h.9 M397.9 363.3h.9 M435.0 361.4h.9 M447.4 360.9h.9 M232.1 361.5h.9 M285.6 363.5h.9 M326.5 363.3h.9 M384.9 362.1h.9 M285.2 363.9h.9 M412.1 363.6h.9 M485.2 362.0h.9 M476.3 362.2h.9 M414.9 363.4h.9 M371.5 362.6h.9 M373.3 361.7h.9 M364.9 362.3h.9 M426.4 362.1h.9 M361.3 362.4h.9 M256.2 361.8h.9 M221.9 363.5h.9 M392.3 361.6h.9 M494.6 361.7h.9 M370.9 362.8h.9 M223.1 362.5h.9 M371.1 362.5h.9 M216.1 360.9h.9 M316.1 366.0h.9 M294.2 360.6h.9 M373.0 358.2h.9 M285.9 356.6h.9 M268.4 359.9h.9 M449.9 364.0h.9 M287.0 359.7h.9 M292.0 364.2h.9 M271.0 359.0h.9 M432.8 363.0h.9 M239.4 360.1h.9 M339.6 362.5h.9 M326.6 369.0h.9 M331.5 354.3h.9 M316.9 357.9h.9 M393.1 362.0h.9 M358.0 364.1h.9 M329.5 360.4h.9 M277.3 367.9h.9 M318.0 358.0h.9 M258.2 362.2h.9 M256.4 359.2h.9 M327.1 358.8h.9 M237.3 368.2h.9 M319.7 359.2h.9 M252.6 362.1h.9 M377.2 360.3h.9 M393.2 389.1h.9 M257.6 389.7h.9 M388.9 391.9h.9 M245.9 389.5h.9 M364.3 390.0h.9 M302.0 390.9h.9 M251.6 389.4h.9 M399.0 390.4h.9 M225.6 389.3h.9 M248.3 390.3h.9 M257.0 390.5h.9 M309.4 389.7h.9 M218.7 390.4h.9 M223.7 389.6h.9 M304.4 389.6h.9 M275.3 391.3h.9 M294.0 389.4h.9 M302.1 390.9h.9 M391.1 389.9h.9 M381.0 387.4h.9 M269.9 390.1h.9 M351.3 389.8h.9 M393.3 390.0h.9 M234.0 389.6h.9 M309.0 391.3h.9 M312.2 391.5h.9 M266.3 390.3h.9 M334.2 391.3h.9 M306.1 390.9h.9 M397.5 389.9h.9 M365.7 390.4h.9 M371.1 390.2h.9 M310.3 392.5h.9 M319.8 389.2h.9 M270.3 390.4h.9 M310.1 390.5h.9 M372.1 391.0h.9 M399.1 389.6h.9 M349.1 388.7h.9 M365.9 390.6h.9 M261.6 389.5h.9 M220.2 389.3h.9 M330.2 391.8h.9 M390.5 391.7h.9 M236.4 390.9h.9 M379.0 390.9h.9 M357.8 391.7h.9 M332.5 390.2h.9 M378.4 390.0h.9 M362.9 388.1h.9 M335.6 389.3h.9 M287.9 390.9h.9 M364.9 390.4h.9 M338.3 389.9h.9 M275.1 389.2h.9 M251.0 389.4h.9 M277.8 388.1h.9 M386.6 391.6h.9 M396.1 389.9h.9 M278.3 389.2h.9 M222.5 390.1h.9 M316.2 390.3h.9 M253.2 389.5h.9 M261.1 390.6h.9 M282.4 390.4h.9 M393.6 389.4h.9 M260.0 390.8h.9 M395.5 388.9h.9 M358.6 390.9h.9 M335.9 390.9h.9 M461.9 388.8h.9 M488.4 390.6h.9 M433.5 391.0h.9 M451.3 385.8h.9 M502.1 390.1h.9 M411.0 388.9h.9 M417.4 388.0h.9 M234.5 410.5h.9 M239.5 410.2h.9 M249.0 410.3h.9 M273.6 410.2h.9 M277.0 410.6h.9 M279.5 410.8h.9 M349.5 410.3h.9 M452.4 410.3h.9 M466.0 410.2h.9 M483.4 411.0h.9 M220.5 345.5h.9 M221.0 353.6h.9 M275.3 340.2h.9 M303.4 378.3h.9 M423.2 377.8h.9 M375.5 351.5h.9 M411.3 353.3h.9 M511.4 355.5h.9 M237.8 380.5h.9 M245.0 352.5h.9 M500.5 383.0h.9 M502.0 381.0h.9 M489.0 386.5h.9" stroke="#e0dc00" stroke-width=".9" fill="none" stroke-opacity=".85"/><polyline points="215.3,382.6 216.2,384.8 217.4,386.2 221.8,386.4 222.6,380 223.5,375.2 224.4,380 225.2,386.4 229.5,386.6 231,384.6 232.5,385.2 234,386.6 243.2,386.6 243.4,352.5 244.4,352 244.6,282 245.2,247.8 245.8,282 246,351 247,352.8 247.2,386.8 300,387.2 517.2,387.2" fill="none" stroke="#1ea4d8" stroke-width="1" stroke-linejoin="round"/><path d="M244.1 386 V352.6 M245.2 352 V282 M246.3 386 V352.6" stroke="#1ea4d8" stroke-width=".9" fill="none"/><g font-size="8.6" fill="#111"><text x="210.6" y="194.50" text-anchor="end">1500</text><text x="210.6" y="231.62" text-anchor="end">1250</text><text x="210.6" y="268.74" text-anchor="end">1000</text><text x="210.6" y="305.86" text-anchor="end">750</text><text x="210.6" y="342.98" text-anchor="end">500</text><text x="210.6" y="380.10" text-anchor="end">250</text><text x="521.6" y="194.50">0.60</text><text x="521.6" y="231.62">0.50</text><text x="521.6" y="268.74">0.40</text><text x="521.6" y="305.86">0.30</text><text x="521.6" y="342.98">0.20</text><text x="521.6" y="380.10">0.10</text><text x="215.20" y="427.4" text-anchor="middle">0</text><text x="245.56" y="427.4" text-anchor="middle">25</text><text x="275.92" y="427.4" text-anchor="middle">51</text><text x="306.28" y="427.4" text-anchor="middle">76</text><text x="336.64" y="427.4" text-anchor="middle">102</text><text x="367.00" y="427.4" text-anchor="middle">128</text><text x="397.36" y="427.4" text-anchor="middle">153</text><text x="427.72" y="427.4" text-anchor="middle">179</text><text x="458.08" y="427.4" text-anchor="middle">204</text><text x="488.44" y="427.4" text-anchor="middle">230</text><text x="518.50" y="427.4" text-anchor="middle">256gB</text></g><text x="214.4" y="189.3" font-size="8.6" fill="#111">MB/<tspan font-size="9.4">秒</tspan></text><text x="517.8" y="189.5" font-size="9.4" fill="#111" text-anchor="end">毫秒</text></svg>
<div class="abs" style="left:706.82px;top:226.05px;width:73.60px;height:19.07px;border:1px solid #2ba3e2;border-radius:3px;background:linear-gradient(#eaf6fd 0,#d9f0fc 48%,#bee6fd 52%,#a7d9f5 100%);box-shadow:inset 0 0 0 1px #5ccaf6"></div>
<div class="abs ui" style="left:731.65px;top:228.35px;line-height:14px">开始</div>
<div class="sep" style="left:697.86px;top:254.59px;width:102.14px"></div>
<div class="rad" style="left:702.59px;top:262.14px;width:12.54px;height:12.54px;"></div>
<div class="abs" style="left:705.92px;top:265.47px;width:5.89px;height:5.89px;border-radius:50%;background:radial-gradient(circle at 35% 35%,#9fe0ff,#1a7ad8 55%,#0a3a90)"></div>
<div class="rad" style="left:702.59px;top:276.99px;width:12.54px;height:12.54px;"></div>
<div class="abs ui" style="left:718.59px;top:261.63px;">读取</div>
<div class="abs ui" style="left:718.59px;top:276.48px;">写入</div>
<div class="sep" style="left:697.86px;top:291.97px;width:102.14px"></div>
<div class="chk" style="left:703.10px;top:299.01px;width:12.93px;height:12.93px;"></div>
<div class="abs ui" style="left:718.72px;top:298.62px;">快捷行程</div>
<div class="abs" style="left:703.23px;top:318.34px;width:61.95px;height:17.79px;border:1px solid #b0b4bc;background:#fff"></div>
<div class="abs ui" style="left:705.54px;top:320.38px;color:#8a8a8a;font-size:11.5px">40</div>
<div class="abs" style="left:748.54px;top:319.49px;width:15.49px;height:15.49px;background:linear-gradient(#f4f4f4,#dcdcdc);border:1px solid #c4c4c4"></div>
<svg style="left:748.54px;top:319.49px;width:15.49px;height:15.49px;" viewBox="0 0 12 12"><path d="M0 6h12" stroke="#c0c0c0" stroke-width=".8"/><path d="M4 4.4 L6 2 L8 4.4Z M4 7.6 L6 10 L8 7.6Z" fill="#888"/></svg>
<div class="abs ui" style="left:776.70px;top:320.51px;font-size:11px;font-family:'Liberation Mono',monospace;letter-spacing:-1.2px">gB</div>
<div class="chk" style="left:703.10px;top:344.32px;width:12.93px;height:12.93px;"></div>
<svg style="left:703.10px;top:344.32px;width:12.93px;height:12.93px;" viewBox="0 0 10 10"><path d="M2.2 4.6 L4.2 7.4 L7.8 2" fill="none" stroke="#3050b8" stroke-width="1.5"/></svg>
<div class="abs ui" style="left:718.72px;top:343.94px;">传输速率</div>
<div class="sep" style="left:697.86px;top:358.66px;width:102.14px"></div>
<div class="abs ui" style="left:702.72px;top:361.47px;">最低</div>
<div class="lcd" style="left:703.23px;top:376.45px;width:92.93px;height:13.44px;color:#00b4ff">181.8 MB/秒</div>
<div class="abs ui" style="left:702.72px;top:391.68px;">最高</div>
<div class="lcd" style="left:703.23px;top:406.78px;width:92.93px;height:13.44px;color:#00b4ff">1118.6 MB/秒</div>
<div class="abs ui" style="left:702.72px;top:422.14px;">平均</div>
<div class="lcd" style="left:703.23px;top:435.46px;width:92.93px;height:13.44px;color:#00b4ff">193.9 MB/秒</div>
<div class="sep" style="left:697.86px;top:456.06px;width:102.14px"></div>
<div class="chk" style="left:703.10px;top:462.08px;width:12.93px;height:12.93px;"></div>
<svg style="left:703.10px;top:462.08px;width:12.93px;height:12.93px;" viewBox="0 0 10 10"><path d="M2.2 4.6 L4.2 7.4 L7.8 2" fill="none" stroke="#3050b8" stroke-width="1.5"/></svg>
<div class="abs ui" style="left:718.72px;top:461.82px;">存取时间</div>
<div class="lcd" style="left:703.23px;top:476.80px;width:92.93px;height:13.44px;color:#ffff00">0.103 毫秒</div>
<div class="chk" style="left:703.10px;top:493.06px;width:12.93px;height:12.93px;"></div>
<svg style="left:703.10px;top:493.06px;width:12.93px;height:12.93px;" viewBox="0 0 10 10"><path d="M2.2 4.6 L4.2 7.4 L7.8 2" fill="none" stroke="#3050b8" stroke-width="1.5"/></svg>
<div class="abs ui" style="left:718.72px;top:492.80px;">突发传输速率</div>
<div class="lcd" style="left:703.23px;top:508.16px;width:92.93px;height:13.44px;color:#ffffff">2767.7 MB/秒</div>
<div class="abs ui" style="left:702.72px;top:524.80px;"><span class="mono" style="font-size:11.6px;letter-spacing:-.95px">CPU </span>占用率</div>
<div class="lcd" style="left:703.23px;top:539.14px;width:92.93px;height:12.67px;color:#ffffff">3.3%</div>
</div></body></html>
